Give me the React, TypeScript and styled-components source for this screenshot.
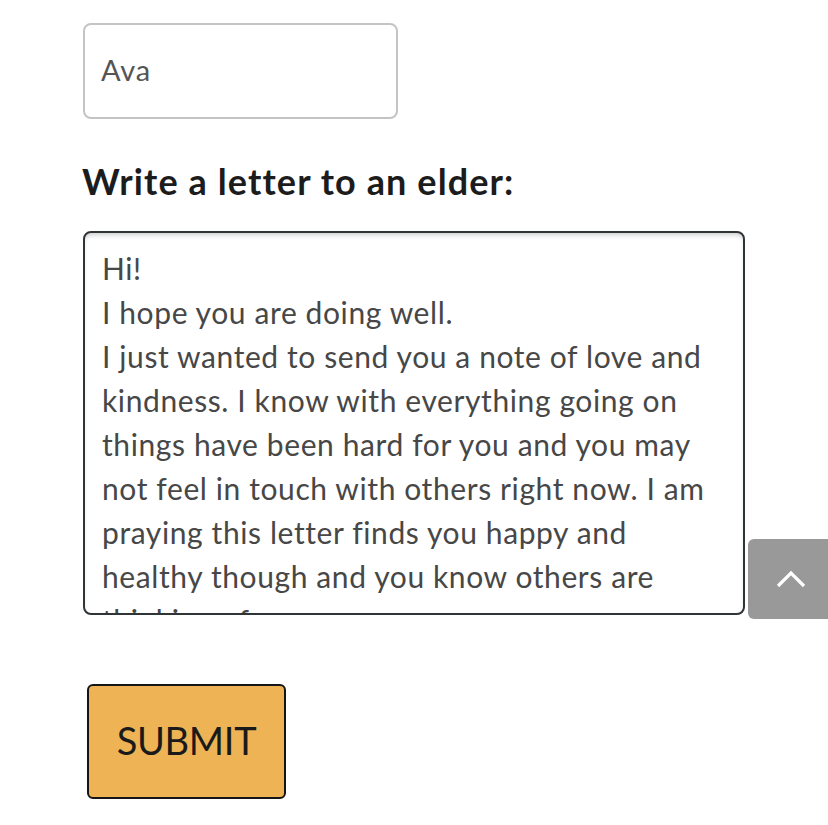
import styled, { createGlobalStyle } from "styled-components";

const letter =
  "Hi!\nI hope you are doing well.\nI just wanted to send you a note of love and kindness. I know with everything going on things have been hard for you and you may not feel in touch with others right now. I am praying this letter finds you happy and healthy though and you know others are thinking of you...";

function App() {
  return (
    <>
      <GlobalStyle />
      <Page>
        <NameInput type="text" defaultValue="Ava" />
        <Heading>Write a letter to an elder:</Heading>
        <LetterBox defaultValue={letter} />
        <SubmitBtn type="submit">SUBMIT</SubmitBtn>
      </Page>
      <ScrollTop aria-label="Back to top">
        <svg width="30" height="18" viewBox="0 0 30 18">
          <path d="M2 16 L15 3 L28 16" fill="none" stroke="#fff" strokeWidth="3.2" />
        </svg>
      </ScrollTop>
    </>
  );
}

const GlobalStyle = createGlobalStyle`
  body {
    margin: 0;
    background: #fff;
    font-family: Lato, "Liberation Sans", sans-serif;
  }
`;

const Page = styled.div`
  display: flex;
  flex-direction: column;
  align-items: flex-start;
  padding: 23px 0 40px 83px;
`;

const NameInput = styled.input`
  box-sizing: border-box;
  width: 315px;
  height: 96px;
  border: 2px solid #c4c4c4;
  border-radius: 8px;
  padding: 0 16px 4px;
  font-family: Lato, sans-serif;
  font-size: 29px;
  letter-spacing: 0.8px;
  color: #555;
  outline: none;
`;

const Heading = styled.h2`
  margin: 40px 0 28px -1px;
  font-size: 36px;
  font-weight: 700;
  letter-spacing: 1.1px;
  color: #1c1c1c;
  line-height: 44px;
`;

const LetterBox = styled.textarea`
  box-sizing: border-box;
  width: 662px;
  height: 384px;
  border: 2px solid #2f3437;
  border-radius: 8px;
  padding: 13px 17px;
  font-family: Lato, sans-serif;
  font-size: 30px;
  letter-spacing: 0.6px;
  line-height: 44px;
  color: #474747;
  resize: none;
  overflow: hidden;
  outline: none;
  box-shadow: inset 0 4px 5px -2px rgba(0, 0, 0, 0.2);
`;

const SubmitBtn = styled.button`
  box-sizing: border-box;
  margin: 69px 0 0 4px;
  width: 199px;
  height: 115px;
  padding-bottom: 5px;
  background: #eeb355;
  border: 2px solid #151515;
  border-radius: 6px;
  font-family: Lato, sans-serif;
  font-size: 38px;
  letter-spacing: -0.3px;
  color: #1a1a1a;
  cursor: pointer;
`;

const ScrollTop = styled.button`
  position: fixed;
  left: 748px;
  top: 539px;
  width: 90px;
  height: 80px;
  display: flex;
  align-items: center;
  justify-content: flex-start;
  padding-left: 28px;
  background: #999;
  border: none;
  border-radius: 6px;
  cursor: pointer;
`;

export default App;
